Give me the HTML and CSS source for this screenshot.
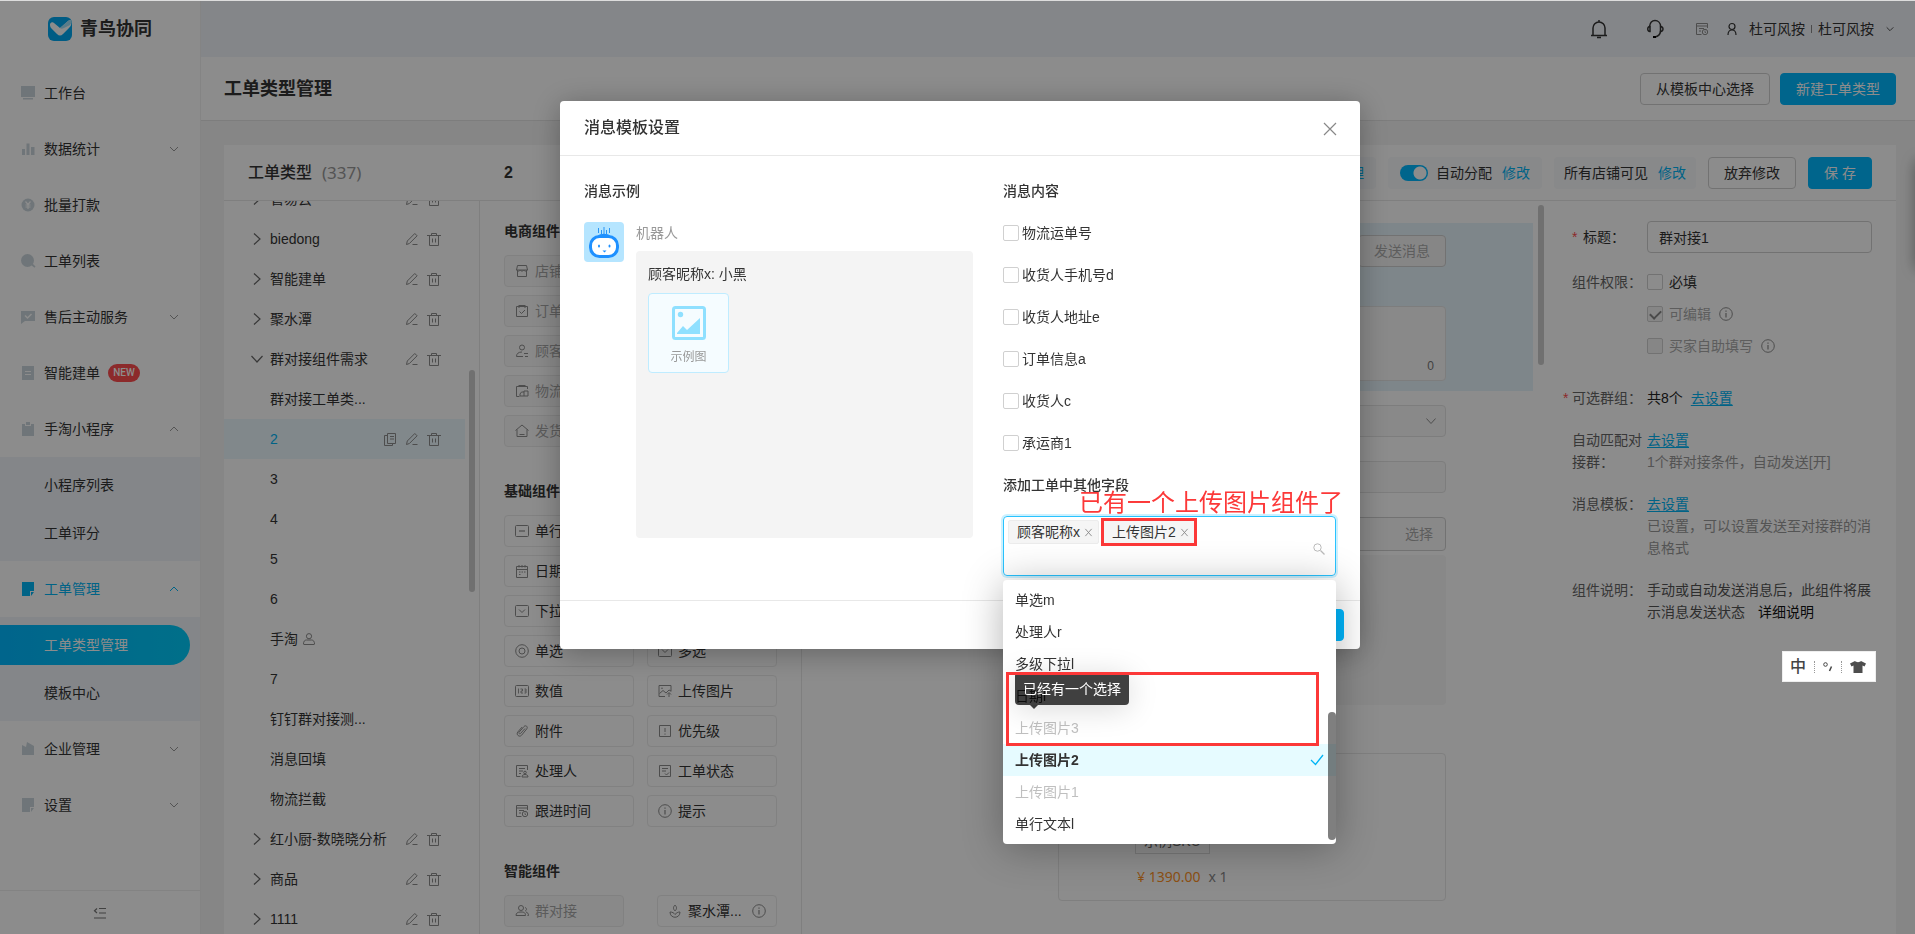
FILE: index.html
```html
<!DOCTYPE html>
<html lang="zh-CN">
<head>
<meta charset="utf-8">
<title>工单类型管理</title>
<link rel="stylesheet" href="styles.css">
</head>
<body>
<svg class="sprite" aria-hidden="true">
  <symbol id="down" viewBox="0 0 12 12"><path d="M2 4l4 4 4-4" fill="none" stroke="currentColor"/></symbol>
  <symbol id="up" viewBox="0 0 12 12"><path d="M2 8l4-4 4 4" fill="none" stroke="currentColor"/></symbol>
  <symbol id="right" viewBox="0 0 12 12"><path d="M3 0.5L9 6l-6 5.500" fill="none" stroke="currentColor" stroke-width="1.2"/></symbol>
  <symbol id="downw" viewBox="0 0 12 12"><path d="M0.500 3L6 9l5.500-6" fill="none" stroke="currentColor" stroke-width="1.2"/></symbol>
  <symbol id="edit" viewBox="0 0 14 14"><path d="M1.500 12.500l.8-3.500 7.500-7.500 2.300 2.300-7.700 7.700-2.900 1zM7.500 12.500h5" fill="none" stroke="currentColor"/></symbol>
  <symbol id="trash" viewBox="0 0 14 14"><path d="M0 3.500h14M2.500 3.500v10h9v-10M4.500 3.500v-2h5v2M5.500 6.500v4M8.500 6.500v4" fill="none" stroke="currentColor"/></symbol>
  <symbol id="copy" viewBox="0 0 14 14"><path d="M4.500 1.500h8v10h-8zM4.500 3.500h-3v10h8v-2M7 4.500h4M7 7h4" fill="none" stroke="currentColor"/></symbol>
  <symbol id="person" viewBox="0 0 14 14"><path d="M1.500 12c0-2.500 1-4 3-4h5c2 0 3 1.500 3 4 0 .5-.5.500-.5.500H2s-.5 0-.5-.5z" fill="none" stroke="currentColor"/><circle cx="7" cy="4.200" r="2.600" fill="none" stroke="currentColor"/></symbol>
  <symbol id="info" viewBox="0 0 14 14"><circle cx="7" cy="7" r="6.300" fill="none" stroke="currentColor"/><path d="M7 6v4.500M7 3.500v1.200" stroke="currentColor" stroke-width="1.200"/></symbol>
  <symbol id="page" viewBox="0 0 14 14"><path d="M12.500 6V1.500h-11v11h5M1.500 4h11M4 6.500h5M4 9h2" fill="none" stroke="currentColor"/><circle cx="10" cy="10" r="2.700" fill="none" stroke="currentColor"/><path d="M10 8.500v2h1" fill="none" stroke="currentColor" stroke-width=".8"/></symbol>
  <symbol id="handler" viewBox="0 0 14 14"><path d="M12.500 6V1.500h-11v11h4M4 4.500h6M4 7h4M4 9.500h2" fill="none" stroke="currentColor"/><circle cx="10" cy="8.500" r="1.300" fill="none" stroke="currentColor"/><path d="M7 13c0-1.500 1-2.500 3-2.500s3 1 3 2.500z" fill="none" stroke="currentColor"/></symbol>
  <symbol id="status" viewBox="0 0 14 14"><path d="M1.500 1.500h11v11h-11zM4 4.500h6M4 7h4M7 9.500l1.500 1.500 2.500-2.500" fill="none" stroke="currentColor"/></symbol>
  <symbol id="shop" viewBox="0 0 14 14"><path d="M2.500 1.500h9l1 4.500h-11zM2.500 6v6.500h9V6M1.500 6c1 1.500 3 1.500 3.700 0 1 1.500 2.600 1.500 3.600 0 .7 1.500 2.700 1.500 3.700 0" fill="none" stroke="currentColor"/></symbol>
  <symbol id="order" viewBox="0 0 14 14"><path d="M1.500 2.500h11v10h-11zM4 1v3M10 1v3M4 1.500h6M4.500 7.500L6.500 9.500l3.500-3.500" fill="none" stroke="currentColor"/></symbol>
  <symbol id="customer" viewBox="0 0 14 14"><circle cx="7" cy="3.500" r="2.500" fill="none" stroke="currentColor"/><path d="M7 8C3.500 8 1.500 9.500 1.500 12.500H8M9 9.500h4M10 12.500h3" fill="none" stroke="currentColor"/></symbol>
  <symbol id="ship" viewBox="0 0 14 14"><path d="M12.500 5V2.500h-11v10h3M4 1v2M10 1v2M4 1.500h6M5 12h8V7H9v5M9 8H6.500L5 10v2" fill="none" stroke="currentColor"/></symbol>
  <symbol id="house" viewBox="0 0 14 14"><path d="M0.500 6.500L7 1l6.500 5.500M2 5.500v7h10v-7M4.500 10.500h5" fill="none" stroke="currentColor"/></symbol>
  <symbol id="line" viewBox="0 0 14 14"><rect x=".5" y="1.500" width="13" height="11" rx="1" fill="none" stroke="currentColor"/><path d="M4 7h6" stroke="currentColor" stroke-width="1.200"/></symbol>
  <symbol id="date" viewBox="0 0 14 14"><path d="M1.500 2.500h11v11h-11zM1.500 5.500h11M4 1v2.500M7 1v2.500M10 1v2.500M4 8h1.500M6.500 8H8M9 8h1.500M4 10.500h1.500" fill="none" stroke="currentColor"/></symbol>
  <symbol id="drop" viewBox="0 0 14 14"><rect x=".5" y="1.500" width="13" height="11" rx="1" fill="none" stroke="currentColor"/><path d="M4 5.500l3 3 3-3" fill="none" stroke="currentColor"/></symbol>
  <symbol id="radio" viewBox="0 0 14 14"><circle cx="7" cy="7" r="6.300" fill="none" stroke="currentColor"/><circle cx="7" cy="7" r="3" fill="none" stroke="currentColor"/></symbol>
  <symbol id="num" viewBox="0 0 14 14"><rect x=".5" y="1.500" width="13" height="11" rx="1" fill="none" stroke="currentColor"/><path d="M3.500 4.500v5M5.500 5h2v2h-1.500v2h2M9.500 5h1.500v4H9.500M9.500 7h1.500" fill="none" stroke="currentColor" stroke-width=".9"/></symbol>
  <symbol id="image" viewBox="0 0 14 14"><path d="M7 12.500H1V1.500h12v6M1.500 9.500l3.500-3 3 2.500 3-3 2 1M11 13V9M9 10.500l2-2 2 2" fill="none" stroke="currentColor"/><circle cx="4" cy="4.200" r=".8" fill="currentColor"/></symbol>
  <symbol id="clip" viewBox="0 0 14 14"><path d="M10 4.500L5.500 9.500c-.8.900-2.200-.3-1.400-1.300l4.900-5.700c1.700-1.800 4.300.3 2.800 2.300l-5.300 6.500c-2 2.300-5.700-.5-3.800-3.200l4.300-5" fill="none" stroke="currentColor"/></symbol>
  <symbol id="prio" viewBox="0 0 14 14"><path d="M1.500 1.500h11v11h-11zM7 4v4M7 9.500v1.200" fill="none" stroke="currentColor"/></symbol>
  <symbol id="group" viewBox="0 0 14 14"><circle cx="6" cy="4" r="2.500" fill="none" stroke="currentColor"/><path d="M1 11.500c0-2.500 1.500-3.500 5-3.500s4.500 1 4.500 3.500zM10 3.500c2 .5 2 3 0 3.500M11 8c1.500.5 2.500 1.500 2.500 3.500h-1" fill="none" stroke="currentColor"/></symbol>
  <symbol id="lotus" viewBox="0 0 14 14"><path d="M2 8c0 7 10 7 10 0-2.500 0-3.500 1-5 2.500C6 9 4.500 8 2 8zM7 1c2 2 2 4 0 6-2-2-2-4 0-6z" fill="none" stroke="currentColor"/></symbol>
</svg>

<div class="app">
  <aside class="side">
    <div class="brand">
      <svg width="24" height="24" viewBox="0 0 24 24"><rect width="24" height="24" rx="6" fill="#00a8f0"/><path d="M2 7c1-2 3-2 4-1l6 5 8-7c1-1 2-1 3-1 1 4 0 6-2 8l-6 6c-2 2-4 2-6 0L3 11c-1-1-1-3-1-4z" fill="#fff"/><path d="M12 11l8-7c1-1 2-1 3-1 1 2 0 4-1 5l-6 3c-2 1-3 1-4 0z" fill="#a5e2fb"/></svg>
      <span>青鸟协同</span>
    </div>
    <nav class="menu">
      <a class="item"><svg class="mi" viewBox="0 0 16 16"><path d="M1 1h14v11H1zM3 13h10v1.500H3z"/></svg>工作台</a>
      <a class="item"><svg class="mi" viewBox="0 0 16 16"><path d="M2 8h3v6H2zM6.500 2.500h3V14h-3zM11 6h3.500v8H11z"/></svg>数据统计<svg class="arr"><use href="#down"/></svg></a>
      <a class="item"><svg class="mi" viewBox="0 0 16 16"><circle cx="8" cy="8" r="6.500"/><path d="M5.500 4.500L8 7.500l2.500-3M5.500 8h5M5.500 10h5M8 7.500V12" fill="none" stroke="#fff" stroke-width="1.200"/></svg>批量打款</a>
      <a class="item"><svg class="mi" viewBox="0 0 16 16"><circle cx="7.500" cy="7.500" r="6.500"/><path d="M11 12l1.500-1.500 3 3-1 1.200z"/></svg>工单列表</a>
      <a class="item"><svg class="mi" viewBox="0 0 16 16"><path d="M1 2h14v10H5l-4 3z"/><path d="M5 6.500L7.500 9l4-4" fill="none" stroke="#fff" stroke-width="1.500"/></svg>售后主动服务<svg class="arr"><use href="#down"/></svg></a>
      <a class="item"><svg class="mi" viewBox="0 0 16 16"><path d="M2 1h12v14H2z"/><path d="M5 6.500h6M5 9.500h6" stroke="#fff" stroke-width="1.200"/></svg>智能建单<span class="new">NEW</span></a>
      <a class="item"><svg class="mi" viewBox="0 0 16 16"><path d="M2 3h3v2h6V3h3v12H2zM6 1h4v3H6z"/></svg>手淘小程序<svg class="arr"><use href="#up"/></svg></a>
      <div class="sub"><a>小程序列表</a><a>工单评分</a></div>
      <a class="item on"><svg class="mi" viewBox="0 0 16 16"><path d="M2 1h12v9h-4v5H2zM11 11h3l-3 4z"/></svg>工单管理<svg class="arr"><use href="#up"/></svg></a>
      <div class="sub"><a class="cur">工单类型管理</a><a>模板中心</a></div>
      <a class="item"><svg class="mi" viewBox="0 0 16 16"><path d="M2 4l4 2 1-5 7 4v9H2z"/></svg>企业管理<svg class="arr"><use href="#down"/></svg></a>
      <a class="item"><svg class="mi" viewBox="0 0 16 16"><path d="M2 1h12v9h-4v5H2zM11 11h3l-3 4z"/></svg>设置<svg class="arr"><use href="#down"/></svg></a>
    </nav>
    <div class="fold"><svg width="14" height="14" viewBox="0 0 14 14"><path d="M6 2.500h7M6 7h7M1 12h12M4 2.500L1.500 4.700 4 7" fill="none" stroke="currentColor" stroke-width="1.200"/></svg></div>
  </aside>

  <div class="main">
    <header class="top">
      <svg class="bell" width="18" height="20" viewBox="0 0 18 20"><path d="M3 16V9a6 6 0 0 1 12 0v7M1 16.500h16M9 1v2M7 18.500h4" fill="none" stroke="currentColor" stroke-width="1.500"/></svg>
      <svg class="head" width="18" height="20" viewBox="0 0 18 20"><path d="M3.500 7.500C4 4 6 1.500 9 1.500s5.500 2.500 5.700 6M14.700 12c-.7 4-2.700 5.500-5.700 6" fill="none" stroke="currentColor" stroke-width="1.500"/><path d="M4 7.500v5c-3 .3-3-5 0-5zM14.500 7.500v5c3.300.3 3.300-5 0-5z" fill="none" stroke="currentColor" stroke-width="1.500"/><path d="M7 17h3v2H7z"/></svg>
      <svg class="ic note" width="14" height="14"><use href="#page"/></svg>
      <svg class="me" width="12" height="14" viewBox="0 0 12 14"><circle cx="6" cy="4.500" r="3" fill="none" stroke="currentColor" stroke-width="1.200"/><path d="M2 13c0-3 1.500-5 4-5s4 2 4 5" fill="none" stroke="currentColor" stroke-width="1.200"/></svg>
      <span>杜可风按</span><i class="bar"></i><span>杜可风按</span>
      <svg class="more" width="10" height="10"><use href="#down"/></svg>
    </header>
    <div class="heading">
      <h1>工单类型管理</h1>
      <button class="btn">从模板中心选择</button>
      <button class="btn primary">新建工单类型</button>
    </div>
    <div class="content">
      <div class="panel">
        <div class="phead">
          <div class="ptitle"><b>工单类型</b><span>(337)</span></div>
          <strong class="pname">2</strong>
          <div class="pill"><span>流程</span><a>管理</a></div>
          <div class="pill"><input type="checkbox" class="switch" id="auto" checked><label for="auto">自动分配</label><a>修改</a></div>
          <div class="pill snug"><span>所有店铺可见</span><a>修改</a></div>
          <button class="btn">放弃修改</button>
          <button class="btn primary save">保 存</button>
        </div>
        <div class="pbody">
          <div class="tree">
            <ul>
              <li><svg class="ca"><use href="#right"/></svg><span>管易云</span><svg class="ic"><use href="#edit"/></svg><svg class="ic"><use href="#trash"/></svg></li>
              <li><svg class="ca"><use href="#right"/></svg><span>biedong</span><svg class="ic"><use href="#edit"/></svg><svg class="ic"><use href="#trash"/></svg></li>
              <li><svg class="ca"><use href="#right"/></svg><span>智能建单</span><svg class="ic"><use href="#edit"/></svg><svg class="ic"><use href="#trash"/></svg></li>
              <li><svg class="ca"><use href="#right"/></svg><span>聚水潭</span><svg class="ic"><use href="#edit"/></svg><svg class="ic"><use href="#trash"/></svg></li>
              <li><svg class="ca"><use href="#downw"/></svg><span>群对接组件需求</span><svg class="ic"><use href="#edit"/></svg><svg class="ic"><use href="#trash"/></svg></li>
              <li class="leaf"><span>群对接工单类...</span></li>
              <li class="leaf sel"><span>2</span><svg class="ic"><use href="#copy"/></svg><svg class="ic"><use href="#edit"/></svg><svg class="ic"><use href="#trash"/></svg></li>
              <li class="leaf"><span>3</span></li>
              <li class="leaf"><span>4</span></li>
              <li class="leaf"><span>5</span></li>
              <li class="leaf"><span>6</span></li>
              <li class="leaf"><span>手淘 <svg class="ic who"><use href="#person"/></svg></span></li>
              <li class="leaf"><span>7</span></li>
              <li class="leaf"><span>钉钉群对接测...</span></li>
              <li class="leaf"><span>消息回填</span></li>
              <li class="leaf"><span>物流拦截</span></li>
              <li><svg class="ca"><use href="#right"/></svg><span>红小厨-数晓晓分析</span><svg class="ic"><use href="#edit"/></svg><svg class="ic"><use href="#trash"/></svg></li>
              <li><svg class="ca"><use href="#right"/></svg><span>商品</span><svg class="ic"><use href="#edit"/></svg><svg class="ic"><use href="#trash"/></svg></li>
              <li><svg class="ca"><use href="#right"/></svg><span>1111</span><svg class="ic"><use href="#edit"/></svg><svg class="ic"><use href="#trash"/></svg></li>
            </ul>
            <i class="thumb"></i>
          </div>
          <div class="parts">
            <h3>电商组件</h3>
            <div class="grid off">
              <button><svg class="ic"><use href="#shop"/></svg>店铺</button><i></i>
              <button><svg class="ic"><use href="#order"/></svg>订单</button><i></i>
              <button><svg class="ic"><use href="#customer"/></svg>顾客</button><i></i>
              <button><svg class="ic"><use href="#ship"/></svg>物流</button><i></i>
              <button><svg class="ic"><use href="#house"/></svg>发货</button>
            </div>
            <h3>基础组件</h3>
            <div class="grid">
              <button><svg class="ic"><use href="#line"/></svg>单行</button><i></i>
              <button><svg class="ic"><use href="#date"/></svg>日期</button><i></i>
              <button><svg class="ic"><use href="#drop"/></svg>下拉</button><i></i>
              <button><svg class="ic"><use href="#radio"/></svg>单选</button>
              <button><svg class="ic"><use href="#drop"/></svg>多选</button>
              <button><svg class="ic"><use href="#num"/></svg>数值</button>
              <button><svg class="ic"><use href="#image"/></svg>上传图片</button>
              <button><svg class="ic"><use href="#clip"/></svg>附件</button>
              <button><svg class="ic"><use href="#prio"/></svg>优先级</button>
              <button><svg class="ic"><use href="#handler"/></svg>处理人</button>
              <button><svg class="ic"><use href="#status"/></svg>工单状态</button>
              <button><svg class="ic"><use href="#page"/></svg>跟进时间</button>
              <button><svg class="ic"><use href="#info"/></svg>提示</button>
            </div>
            <h3>智能组件</h3>
            <div class="grid wide">
              <button disabled><svg class="ic"><use href="#group"/></svg>群对接</button>
              <button><svg class="ic"><use href="#lotus"/></svg>聚水潭...<svg class="ic"><use href="#info"/></svg></button>
            </div>
          </div>
          <div class="preview">
            <div class="hot">
              <button class="btn ghost">发送消息</button>
              <div class="area">0</div>
            </div>
            <div class="fields">
              <div class="fake"><svg class="ic"><use href="#downw"/></svg></div>
              <div class="fake"></div>
              <div class="fake pick">选择</div>
              <div class="block"></div>
              <div class="card">
                <span class="sku">示例SKU</span>
                <p><em>¥ 1390.00</em>x 1</p>
              </div>
            </div>
            <i class="thumb"></i>
          </div>
          <div class="props">
            <div class="row first"><label class="lab req dark" for="ttl">标题：</label><input id="ttl" class="text" value="群对接1"></div>
            <div class="row"><span class="lab">组件权限：</span>
              <div>
                <label class="opt"><input type="checkbox" class="cb">必填</label>
                <label class="opt dim"><input type="checkbox" class="cb" checked disabled>可编辑<svg class="ic"><use href="#info"/></svg></label>
                <label class="opt dim"><input type="checkbox" class="cb" disabled>买家自助填写<svg class="ic"><use href="#info"/></svg></label>
              </div>
            </div>
            <div class="row"><span class="lab req">可选群组：</span><div class="val"><span class="cnt">共8个</span><a href="#">去设置</a></div></div>
            <div class="row"><span class="lab">自动匹配对接群：</span><div class="val"><a href="#">去设置</a><small>1个群对接条件，自动发送[开]</small></div></div>
            <div class="row"><span class="lab">消息模板：</span><div class="val"><a href="#">去设置</a><small>已设置，可以设置发送至对接群的消息格式</small></div></div>
            <div class="row"><span class="lab">组件说明：</span><div class="val">手动或自动发送消息后，此组件将展示消息发送状态<span class="detail">详细说明</span></div></div>
          </div>
        </div>
      </div>
    </div>
  </div>
</div>
<div class="drawer"></div>
<div class="mask"></div>

<div class="wrap">
  <section class="modal" role="dialog" aria-label="消息模板设置">
    <div class="mhead"><h2>消息模板设置</h2><button class="close" aria-label="关闭"><svg width="14" height="14" viewBox="0 0 14 14"><path d="M1 1l12 12M13 1L1 13" stroke="currentColor" stroke-width="1.200"/></svg></button></div>
    <div class="mbody">
      <div class="left">
        <h4>消息示例</h4>
        <div class="chat">
          <svg class="bot" width="40" height="40" viewBox="0 0 40 40"><rect width="40" height="40" rx="4" fill="#b5e5ff"/><path d="M14.500 6v5M17.500 8v4M20 5v8M22.500 8v4M25.500 6v5" stroke="#2a95f5"/><rect x="6.500" y="14.500" width="27" height="20" rx="9" fill="#fff" stroke="#1e90ff" stroke-width="3"/><path d="M14 14c1-3 11-3 12 0z" fill="#1e90ff"/><ellipse cx="15" cy="24" rx="1" ry="1.500" fill="#1e90ff"/><ellipse cx="25.500" cy="24" rx="1" ry="1.500" fill="#1e90ff"/><path d="M18.500 28.500h4l-2 2z" fill="#1e90ff"/></svg>
          <div class="talk">
            <span class="nick">机器人</span>
            <div class="bubble">
              <p>顾客昵称x: 小黑</p>
              <div class="pic"><svg width="34" height="34" viewBox="0 0 34 34"><rect x="1.500" y="1.500" width="31" height="31" rx="2" fill="none" stroke="#8fe0ff" stroke-width="3"/><circle cx="8.500" cy="8.500" r="2.700" fill="#8fe0ff"/><path d="M5 28v-1l6-7 4 4L28 12v16z" fill="#8fe0ff"/></svg><span>示例图</span></div>
            </div>
          </div>
        </div>
      </div>
      <div class="rightc">
        <h4>消息内容</h4>
        <div class="checks">
          <label><input type="checkbox" class="cb">物流运单号</label>
          <label><input type="checkbox" class="cb">收货人手机号d</label>
          <label><input type="checkbox" class="cb">收货人地址e</label>
          <label><input type="checkbox" class="cb">订单信息a</label>
          <label><input type="checkbox" class="cb">收货人c</label>
          <label><input type="checkbox" class="cb">承运商1</label>
        </div>
        <h4>添加工单中其他字段</h4>
        <div class="select">
          <span class="tag">顾客昵称x<svg viewBox="0 0 10 10"><path d="M1.500 1l7 8M8.500 1l-7 8" stroke="currentColor"/></svg></span>
          <span class="tag marked">上传图片2<svg viewBox="0 0 10 10"><path d="M1.500 1l7 8M8.500 1l-7 8" stroke="currentColor"/></svg></span>
          <svg class="find" width="12" height="12" viewBox="0 0 12 12"><circle cx="4.500" cy="4.500" r="3.700" fill="none" stroke="currentColor"/><path d="M7.500 7.500l4 4" stroke="currentColor" stroke-width="1.200"/></svg>
          <span class="remark">已有一个上传图片组件了</span>
          <div class="options" role="listbox">
            <div role="option">单选m</div>
            <div role="option">处理人r</div>
            <div role="option">多级下拉l</div>
            <div role="option">日期l</div>
            <div role="option" class="dis">上传图片3</div>
            <div role="option" class="chosen">上传图片2<svg width="14" height="12" viewBox="0 0 14 12"><path d="M1 6l4.500 4.500L13 1" fill="none" stroke="#00b4f5" stroke-width="1.300"/></svg></div>
            <div role="option" class="dis">上传图片1</div>
            <div role="option">单行文本l</div>
            <i class="scroll"></i>
            <span class="tip">已经有一个选择</span>
            <i class="frame"></i>
          </div>
        </div>
      </div>
    </div>
    <div class="mfoot"><button class="btn primary">确 定</button></div>
  </section>
</div>

<div class="ime"><span>中</span><i></i><svg width="12" height="12" viewBox="0 0 12 12"><circle cx="3.500" cy="3.500" r="1.800" fill="none" stroke="#444"/><path d="M9.500 5.500L7.500 10" stroke="#444" stroke-width="1.500"/></svg><i></i><svg width="16" height="14" viewBox="0 0 16 14"><path d="M5 1c1 1.500 5 1.500 6 0l5 2.500-1.500 3-2-1V13h-9V5.500l-2 1L0 3.500z" fill="#4d4d4d"/></svg></div>
</body>
</html>
```
FILE: styles.css
```css
* { box-sizing: border-box; }
body {
  margin: 0;
  height: 100vh;
  overflow: hidden;
  font: 14px/22px "Liberation Sans", "Noto Sans CJK SC", sans-serif;
  color: #333;
  background: #fff;
}
h1, h2, h3, h4, p, ul { margin: 0; padding: 0; }
li { list-style: none; }
i, em { font-style: normal; }
button, input { font: inherit; color: inherit; }
a { color: #00b4f5; }
.sprite { display: none; }
.ic { width: 14px; height: 14px; color: #8c8c8c; flex: none; }

.btn {
  height: 32px;
  padding: 0 15px;
  border: 1px solid #d0d0d0;
  border-radius: 4px;
  background: #fff;
  white-space: nowrap;
}
.btn.primary { background: #00b8ff; border-color: #00b8ff; color: #fff; }

.app { display: flex; height: 100vh; border-top: 1px solid #ddd; }

/* sidebar */
.side {
  display: flex;
  flex-direction: column;
  flex: none;
  width: 201px;
  border-right: 1px solid #f0f0f0;
}
.brand {
  display: flex;
  align-items: center;
  gap: 8px;
  height: 56px;
  margin-bottom: 8px;
  padding-left: 48px;
  font-size: 18px;
  font-weight: 700;
}
.menu { flex: 1; }
.item { display: flex; align-items: center; gap: 8px; height: 56px; padding: 0 20px; color: #333; }
.item.on { color: #00b4f5; }
.item.on .mi { fill: #00b4f5; }
.mi { width: 16px; height: 16px; fill: #cbd6dc; }
.arr { width: 12px; height: 12px; margin-left: auto; color: #999; }
.item.on .arr { color: inherit; }
.new {
  width: 32px;
  border-radius: 9px;
  background: #ff4d4f;
  color: #fff;
  font-family: Roboto, sans-serif;
  font-size: 10px;
  font-weight: 500;
  line-height: 18px;
  text-align: center;
}
.sub { padding: 4px 0; background: #f0f5fa; }
.sub a { display: flex; align-items: center; height: 40px; margin: 4px 10px 8px 0; padding-left: 44px; color: #333; }
.sub a + a { margin: 8px 10px 4px 0; }
.sub .cur { border-radius: 0 20px 20px 0; background: linear-gradient(90deg, #00b8ff, #00cbfa); color: #fff; }
.fold { display: flex; align-items: center; justify-content: center; height: 44px; border-top: 1px solid #eee; color: #777; }

/* page head */
.main { display: flex; flex-direction: column; flex: 1; min-width: 0; }
.top {
  display: flex;
  align-items: center;
  justify-content: flex-end;
  flex: none;
  height: 56px;
  padding-right: 20px;
  background: #f1f4f9;
}
.head { margin-left: 38px; }
.note { margin-left: 31px; }
.me { margin: 0 11px 0 17px; }
.bar { width: 1px; height: 8px; margin: 0 6px; background: #888; }
.more { margin-left: 11px; }
.heading {
  display: flex;
  align-items: center;
  gap: 10px;
  flex: none;
  height: 64px;
  padding: 0 19px 0 23px;
  border-bottom: 1px solid #e4e4e4;
}
h1 { margin-right: auto; font-size: 18px; }
.content { flex: 1; min-height: 0; padding: 24px 19px 0 23px; background: #f5f5f5; }
.panel { display: flex; flex-direction: column; height: 100%; background: #fff; }
.phead {
  display: flex;
  align-items: center;
  gap: 12px;
  flex: none;
  height: 56px;
  padding-right: 24px;
  border-bottom: 1px solid #e8e8e8;
}
.ptitle { display: flex; width: 268px; padding-left: 24px; gap: 10px; font-size: 16px; }
.ptitle b { font-weight: 500; }
.ptitle span { font-family: "Noto Sans", sans-serif; font-size: 17px; color: #999; }
.pname { margin-right: auto; font-size: 16px; }
.pill {
  display: flex;
  align-items: center;
  gap: 8px;
  height: 32px;
  padding: 0 12px;
  border-radius: 4px;
  background: #f7f9fc;
}
.pill.snug { padding: 0 10px; }
.pill a { margin-left: 2px; color: #00b4f5; }
.switch {
  appearance: none;
  width: 28px;
  height: 16px;
  margin: 0;
  border-radius: 8px;
  background: radial-gradient(circle at 20px 8px, #fff 6px, #00b8ff 7px);
}
.save { width: 64px; }

.pbody { display: flex; flex: 1; min-height: 0; }
.thumb { position: absolute; width: 6px; border-radius: 3px; background: #ccc; }

/* type tree */
.tree { position: relative; flex: none; width: 256px; border-right: 1px solid #e8e8e8; overflow: hidden; }
.tree ul { margin: -22px 14px 0 0; }
.tree li { display: flex; align-items: center; gap: 8px; height: 40px; padding: 0 24px 0 27px; }
.tree li span { margin-right: auto; white-space: nowrap; }
.tree .ca { width: 12px; height: 12px; margin-right: -1px; color: #666; }
.tree .leaf { padding-left: 46px; }
.tree .sel { background: #ecf8fd; color: #00b4f5; }
.tree .who { vertical-align: -2px; }
.tree .thumb { right: 4px; top: 169px; height: 222px; }

/* component palette */
.parts { flex: none; width: 322px; padding: 19px 24px 0; border-right: 1px solid #e8e8e8; overflow: hidden; }
.parts h3 { margin-bottom: 13px; font-size: 14px; line-height: 22px; font-weight: 700; }
.grid { display: grid; grid-template-columns: 1fr 1fr; gap: 8px 13px; margin-bottom: 33px; }
.grid button {
  display: flex;
  align-items: center;
  gap: 6px;
  height: 32px;
  padding: 0 10px;
  border: 1px solid #ebebeb;
  border-radius: 4px;
  background: #fff;
  white-space: nowrap;
}
.grid.off button, .grid button:disabled { background: #fafafa; color: #a6a6a6; }
.grid.wide { grid-template-columns: 120px 120px; justify-content: space-between; }
.grid.wide .ic:last-child:not(:first-child) { margin-left: auto; }

/* form preview */
.preview { position: relative; flex: 1; min-width: 0; padding: 22px 15px 0 0; overflow: hidden; }
.hot { display: flex; flex-direction: column; align-items: flex-end; gap: 39px; height: 168px; padding: 12px 87px 0 256px; background: #e6f4fb; }
.ghost { background: #f5f5f5; border-color: #d0d0d0; color: #aaa; }
.area { align-self: stretch; height: 75px; padding: 48px 11px 0; border: 1px solid #e4e4e4; border-radius: 4px; background: #fafafa; color: #777; text-align: right; font-size: 12px; }
.fields { display: flex; flex-direction: column; padding: 14px 87px 0 256px; }
.fake { display: flex; align-items: center; justify-content: flex-end; height: 32px; margin-bottom: 24px; padding: 0 8px; border: 1px solid #e4e4e4; border-radius: 4px; background: #fafafa; }
.fake .ic { width: 10px; height: 10px; margin-right: 1px; }
.fake.pick { height: 34px; margin-bottom: 4px; padding: 0 12px; border-color: #d0d0d0; color: #aaa; }
.block { height: 150px; border-radius: 4px; background: #f7f7f7; }
.card { height: 148px; margin-top: 48px; padding: 74px 76px 0; border: 1px solid #e8e8e8; border-radius: 4px; }
.sku { display: inline-block; padding: 0 8px; border: 1px solid #ddd; line-height: 24px; color: #666; }
.card p { margin: 12px 0 0 2px; font-family: "Noto Sans", "Noto Sans CJK SC", sans-serif; color: #888; }
.card em { margin-right: 8px; color: #ff9326; }
.preview .thumb { right: 4px; top: 4px; height: 160px; }

/* properties */
.props { flex: none; width: 348px; padding: 20px 24px 0; }
.row { display: flex; margin-bottom: 20px; }
.row.first { align-items: center; margin-bottom: 18px; }
.lab { position: relative; flex: none; width: 75px; color: #666; }
.lab.req::before { content: "*"; position: absolute; left: -9px; color: #ff4d4f; }
.lab.dark { padding-left: 11px; color: #333; }
.lab.dark::before { margin-left: 9px; }
.text { flex: 1; min-width: 0; height: 32px; padding: 0 11px; border: 1px solid #d0d0d0; border-radius: 4px; background: #fff; }
.opt { display: flex; align-items: center; gap: 6px; margin-bottom: 10px; }
.opt.dim { color: #aaa; }
.opt .ic { margin-left: 2px; }
.cb { appearance: none; flex: none; width: 16px; height: 16px; margin: 0; border: 1px solid #d0d0d0; border-radius: 2px; background: #fff; }
.cb:disabled { background: #f5f5f5; }
.cb:checked::after { content: ""; display: block; width: 5px; height: 9px; margin: 1px auto; border: solid #888; border-width: 0 2px 2px 0; transform: rotate(45deg); }
.val { flex: 1; color: #555; }
.val a { text-decoration: underline; text-underline-offset: 2px; }
.cnt { margin-right: 8px; color: #222; }
small { display: block; font-size: 14px; color: #999; }
.detail { margin-left: 13px; color: #111; }

.drawer { position: fixed; right: -20px; top: 160px; width: 20px; height: 110px; box-shadow: 0 0 16px rgba(0, 0, 0, .35); }
.mask { position: fixed; inset: 1px 0 0; background: rgba(0, 0, 0, .45); }

/* dialog */
.wrap { position: fixed; inset: 0; display: flex; align-items: flex-start; justify-content: center; padding: 101px 0 0 5px; }
.modal { width: 800px; border-radius: 4px; background: #fff; box-shadow: 0 4px 30px rgba(0, 0, 0, .3); }
.mhead { display: flex; align-items: center; justify-content: space-between; height: 55px; padding: 0 23px 0 24px; border-bottom: 1px solid #e8e8e8; }
h2 { font-size: 16px; font-weight: 500; }
.close { display: flex; padding: 1px 0 0; border: 0; background: none; color: #888; }
.mbody { display: flex; justify-content: space-between; height: 444px; padding: 24px; }
h4 { font-size: 14px; line-height: 22px; font-weight: 500; }
.chat { display: flex; gap: 12px; margin-top: 20px; }
.bot { flex: none; }
.talk { width: 337px; }
.nick { color: #999; }
.bubble { height: 287px; margin-top: 7px; padding: 12px; border-radius: 4px; background: #f4f4f4; }
.pic {
  display: flex;
  flex-direction: column;
  align-items: center;
  gap: 6px;
  width: 81px;
  height: 80px;
  margin-top: 8px;
  padding-top: 12px;
  border: 1px solid #bfecff;
  border-radius: 4px;
  background: #f5fcff;
  color: #999;
  font-size: 12px;
}
.rightc { width: 333px; }
.checks { display: flex; flex-direction: column; gap: 20px; margin: 20px 0; }
.checks label { display: flex; align-items: center; gap: 3px; }
.select {
  position: relative;
  display: flex;
  align-items: flex-start;
  gap: 4px;
  height: 60px;
  margin-top: 20px;
  padding: 3px 4px;
  border: 1px solid #29c3ff;
  border-radius: 4px;
  box-shadow: 0 0 0 2px rgba(0, 184, 255, .2);
}
.tag {
  display: flex;
  align-items: center;
  gap: 4px;
  height: 24px;
  padding: 0 5px 0 8px;
  border: 1px solid #ececec;
  border-radius: 2px;
  background: #f5f5f5;
}
.tag svg { width: 9px; height: 9px; color: #888; }
.marked { border-radius: 0; outline: 3px solid #fc3838; outline-offset: -1px; }
.find { position: absolute; right: 10px; top: 26px; color: #bbb; }
.remark { position: absolute; left: 75px; top: -30px; color: #fc3838; font-size: 24px; line-height: 32px; white-space: nowrap; }
.options {
  position: absolute;
  left: -1px;
  right: -1px;
  top: 63px;
  padding: 4px 0;
  border-radius: 4px;
  background: #fff;
  box-shadow: 0 4px 40px rgba(0, 0, 0, .3);
}
.options > div { display: flex; align-items: center; justify-content: space-between; height: 32px; padding: 0 12px; }
.options .dis { color: #bfbfbf; }
.options .chosen { background: #e6fbff; font-weight: 700; }
.scroll { position: absolute; right: 0; bottom: 4px; width: 8px; height: 128px; border-radius: 4px; background: rgba(0, 0, 0, .5); }
.tip {
  position: absolute;
  left: 12px;
  top: 92px;
  padding: 6px 8px 5px;
  border-radius: 4px;
  background: rgba(0, 0, 0, .75);
  color: #fff;
  box-shadow: 0 4px 30px rgba(0, 0, 0, .15);
}
.tip::after { content: ""; position: absolute; left: 15px; top: 100%; border: solid transparent; border-width: 4px 4px 0; border-top-color: rgba(0, 0, 0, .75); }
.frame { position: absolute; left: 3px; right: 17px; top: 92px; height: 74px; border: 3px solid #fc3838; }
.mfoot { display: flex; justify-content: flex-end; padding: 8px 16px; border-top: 1px solid #e8e8e8; }

.ime {
  position: fixed;
  right: 39px;
  top: 651px;
  display: flex;
  align-items: center;
  justify-content: space-between;
  width: 94px;
  height: 31px;
  padding: 0 9px 0 7px;
  background: #fff;
  border: 1px solid #eee;
  color: #444;
}
.ime span { font-size: 16px; font-weight: 500; }
.ime i { height: 12px; border-left: 1px dotted #999; }
```
